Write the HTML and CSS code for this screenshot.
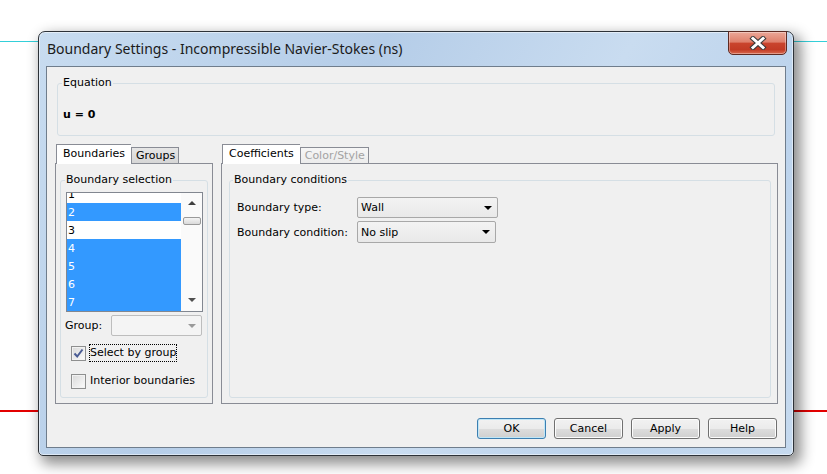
FILE: index.html
```html
<!DOCTYPE html>
<html lang="en">
<head>
  <meta charset="utf-8" />
  <title>Boundary Settings</title>
  <link rel="stylesheet" href="styles.css">
</head>

<body>
  <div class="window">
    <div class="title-bar">
      <span class="title">Boundary Settings - Incompressible Navier-Stokes (ns)</span>
      <button class="close" title="Close">
        <svg width="20" height="14" viewBox="0 0 20 14">
          <path d="M5 2.5 L15 11.5 M15 2.5 L5 11.5" stroke="#3a3a3a" stroke-width="5" stroke-linecap="square" fill="none" />
          <path d="M5 2.5 L15 11.5 M15 2.5 L5 11.5" stroke="#ffffff" stroke-width="3" stroke-linecap="square" fill="none" />
        </svg>
      </button>
    </div>

    <div class="client">
      <!-- equation -->
      <fieldset class="group equation">
        <legend>Equation</legend>
        <div class="formula">u = 0</div>
      </fieldset>

      <div class="panels">
        <!-- boundaries / groups -->
        <div class="tabpane left">
          <div class="tabs">
            <div class="tab active">Boundaries</div>
            <div class="tab">Groups</div>
          </div>
          <div class="tab-body">
            <fieldset class="group selection">
              <legend>Boundary selection</legend>
              <div class="listbox">
                <ul class="items">
                  <li>1</li>
                  <li class="sel">2</li>
                  <li>3</li>
                  <li class="sel">4</li>
                  <li class="sel">5</li>
                  <li class="sel">6</li>
                  <li class="sel">7</li>
                </ul>
                <div class="scrollbar">
                  <span class="arrow up"></span>
                  <span class="thumb"></span>
                  <span class="arrow down"></span>
                </div>
              </div>

              <div class="group-row">
                <label>Group:</label>
                <div class="combo disabled"><span></span><i class="caret"></i></div>
              </div>

              <label class="check first">
                <span class="box">
                  <svg width="13" height="13" viewBox="0 0 13 13">
                    <path d="M2.5 6.5 L5.2 9.5 L10.5 2.5" stroke="#4a5c94" stroke-width="2" fill="none" />
                  </svg>
                </span>
                <span class="text focus">Select by group</span>
              </label>
              <label class="check second">
                <span class="box"></span>
                <span class="text">Interior boundaries</span>
              </label>
            </fieldset>
          </div>
        </div>

        <!-- coefficients / color -->
        <div class="tabpane right">
          <div class="tabs">
            <div class="tab active">Coefficients</div>
            <div class="tab disabled">Color/Style</div>
          </div>
          <div class="tab-body">
            <fieldset class="group conditions">
              <legend>Boundary conditions</legend>
              <div class="form">
                <label>Boundary type:</label>
                <div class="combo type"><span>Wall</span><i class="caret"></i></div>
                <label>Boundary condition:</label>
                <div class="combo cond"><span>No slip</span><i class="caret"></i></div>
              </div>
            </fieldset>
          </div>
        </div>
      </div>

      <div class="actions">
        <button class="btn default">OK</button>
        <button class="btn">Cancel</button>
        <button class="btn">Apply</button>
        <button class="btn">Help</button>
      </div>
    </div>
  </div>
</body>
</html>
```

FILE: styles.css
```css
html, body {
  height: 100%;
}

body {
  margin: 0;
  padding: 31px 0 0 38px;
  box-sizing: border-box;
  overflow: hidden;
  font-family: "DejaVu Sans", sans-serif;
  font-size: 11px;
  color: #000;
  background:
    linear-gradient(#34cfd9, #34cfd9) 0 41px / 100% 1px no-repeat,
    linear-gradient(#e30000, #e30000) 0 410px / 100% 2px no-repeat,
    #ffffff;
}

.window {
  box-sizing: border-box;
  width: 756px;
  height: 425px;
  border: 1px solid #2d3238;
  border-radius: 7px 7px 5px 5px;
  padding: 0 7px 7px;
  display: flex;
  flex-direction: column;
  background: linear-gradient(120deg, #c8dcf0 0%, #b5cde8 35%, #c9dcf0 60%, #bcd3ec 80%, #c6daef 100%);
  box-shadow: 5px 6px 14px 2px rgba(0, 0, 0, 0.45), inset 0 0 0 1px rgba(255, 255, 255, 0.5);
}

.title-bar {
  height: 34px;
  margin: 0 -7px;
  padding-left: 8px;
  display: flex;
  justify-content: space-between;
  align-items: flex-start;
}

.title {
  font-family: "Noto Sans", sans-serif;
  font-size: 14px;
  line-height: 20px;
  padding-top: 7px;
  color: #1b1b1b;
}

.close {
  margin: -1px 6px 0 0;
  width: 59px;
  height: 24px;
  padding: 0;
  border: 1px solid #5e2a22;
  border-radius: 0 0 5px 5px;
  background: linear-gradient(#eba797 0%, #df806c 45%, #c9442d 52%, #c23b25 80%, #d9694f 100%);
  box-shadow: inset 0 0 0 1px rgba(255, 255, 255, 0.35);
  display: flex;
  justify-content: center;
  align-items: center;
}

.client {
  flex: 1;
  border: 1px solid #6f7d8c;
  background: #f0f0f0;
  display: flex;
  flex-direction: column;
  padding-top: 9px;
}

/* group boxes */
fieldset.group {
  margin: 0;
  min-width: 0;
  border: 1px solid #d5dfe5;
  border-radius: 3px;
}

fieldset.group legend {
  padding: 0 1px;
  margin-left: -1px;
  line-height: 14px;
}

fieldset.equation {
  box-sizing: border-box;
  height: 60px;
  margin: 0 10px;
  padding: 0 5px;
}

.formula {
  padding-top: 18px;
  line-height: 14px;
  font-weight: bold;
}

.panels {
  display: flex;
  gap: 8px;
  height: 260px;
  margin-top: 8px;
  padding: 0 7px 0 8px;
}

.tabpane {
  display: flex;
  flex-direction: column;
}

.tabpane.left {
  width: 158px;
}

.tabpane.right {
  flex: 1;
}

.tabs {
  display: flex;
  align-items: flex-end;
  height: 19px;
  padding-left: 1px;
  position: relative;
  z-index: 1;
}

.tab {
  height: 15px;
  line-height: 16px;
  padding: 0 3px 0 4px;
  border: 1px solid #898c95;
  border-bottom: none;
  background: linear-gradient(#e6e6e6, #d6d6d6);
}

.tab.active {
  height: 19px;
  line-height: 18px;
  padding: 0 6px;
  margin-bottom: -1px;
  border-right: none;
  background: #ffffff;
}

.tab.disabled {
  color: #a3a3a3;
  background: linear-gradient(#f6f6f6, #ececec);
}

.tab-body {
  flex: 1;
  border: 1px solid #898c95;
  background: #f0f0f0;
  display: flex;
  flex-direction: column;
  padding: 9px 4px 5px;
}

.right .tab-body {
  padding: 9px 6px 5px 7px;
}

fieldset.selection {
  flex: 1;
  padding: 0 4px 0 5px;
}

fieldset.conditions {
  flex: 1;
  padding: 0 5px 0 4px;
}

/* list */
.listbox {
  box-sizing: border-box;
  height: 120px;
  margin-top: 5px;
  border: 1px solid #828790;
  background: #ffffff;
  display: flex;
  overflow: hidden;
}

.items {
  flex: 1;
  list-style: none;
  margin: -8px 0 0;
  padding: 0;
}

.items li {
  height: 18px;
  line-height: 19px;
  padding-left: 1px;
}

.items li.sel {
  background: #3399ff;
  color: #ffffff;
}

.scrollbar {
  width: 21px;
  display: flex;
  flex-direction: column;
  align-items: center;
  background: #fafafa;
}

.arrow {
  width: 0;
  height: 0;
  border-left: 4px solid transparent;
  border-right: 4px solid transparent;
}

.arrow.up {
  margin-top: 8px;
  border-bottom: 4px solid #404040;
}

.arrow.down {
  margin-top: auto;
  margin-bottom: 9px;
  border-top: 4px solid #505050;
}

.thumb {
  box-sizing: border-box;
  width: 18px;
  height: 8px;
  margin-top: 12px;
  margin-left: 1px;
  border: 1px solid #9a9a9a;
  border-radius: 2px;
  background: linear-gradient(#f5f5f5, #dadada);
}

/* combos */
.group-row {
  display: flex;
  align-items: center;
  height: 21px;
  margin-top: 3px;
}

.group-row label {
  width: 45px;
  margin-left: -1px;
  padding-right: 1px;
}

.combo {
  box-sizing: border-box;
  height: 21px;
  border: 1px solid #a8a8a8;
  border-radius: 2px;
  background: linear-gradient(#f3f3f3, #e9e9e9);
  display: flex;
  align-items: center;
  justify-content: space-between;
  padding: 0 5px 0 3px;
}

.combo.disabled {
  width: 91px;
  border-color: #bdbdbd;
  background: #f4f4f4;
}

.combo.type {
  width: 141px;
}

.combo.cond {
  width: 139px;
  height: 22px;
}

.caret {
  width: 0;
  height: 0;
  border-left: 4px solid transparent;
  border-right: 4px solid transparent;
  border-top: 4px solid #000000;
}

.combo.disabled .caret {
  border-top-color: #9a9a9a;
}

/* checkboxes */
.check {
  display: flex;
  align-items: center;
  height: 18px;
  margin-left: 5px;
}

.check.first {
  margin-top: 8px;
}

.check.second {
  margin-top: 10px;
}

.box {
  box-sizing: border-box;
  width: 15px;
  height: 15px;
  border: 1px solid #8e8f8f;
  background: linear-gradient(135deg, #d9d9d9, #fbfbfb);
  box-shadow: inset 0 0 0 1px #f2f2f2;
  display: flex;
  justify-content: center;
  align-items: center;
}

.text {
  margin-left: 3px;
  line-height: 16px;
  border: 1px solid transparent;
}

.text.focus {
  border: 1px dotted #000000;
}

/* form on the right */
.form {
  display: grid;
  grid-template-columns: 120px auto;
  justify-content: start;
  align-items: center;
  row-gap: 3px;
  margin-top: 10px;
  padding-left: 3px;
}

/* buttons */
.actions {
  display: flex;
  justify-content: flex-end;
  gap: 8px;
  margin-top: 14px;
  padding-right: 8px;
}

.btn {
  width: 69px;
  height: 21px;
  padding: 0;
  font-family: "DejaVu Sans", sans-serif;
  font-size: 11px;
  color: #000;
  border: 1px solid #707070;
  border-radius: 3px;
  background: linear-gradient(#f2f2f2 0%, #ebebeb 50%, #dddddd 51%, #cfcfcf 100%);
  box-shadow: inset 0 0 0 1px #fcfcfc;
}

.btn.default {
  border-color: #3c7fb1;
  box-shadow: inset 0 0 0 1px #bfe6f7;
}
```
